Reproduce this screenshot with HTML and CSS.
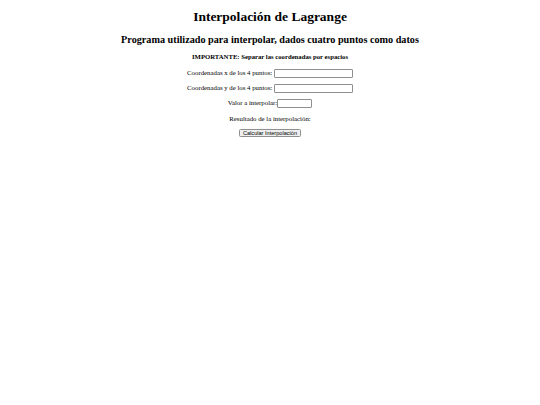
FILE: index.html
```html
<!DOCTYPE html>
<html lang="es">
<head>
<meta charset="utf-8">
<title>Interpolación de Lagrange</title>
<link rel="stylesheet" href="styles.css">
</head>
<body>
<div class="page">
  <h1 class="title">Interpolación de Lagrange</h1>
  <h2 class="subtitle">Programa utilizado para interpolar, dados cuatro puntos como datos</h2>
  <h5 class="note">IMPORTANTE: Separar las coordenadas por espacios</h5>
  <p class="row">Coordenadas x de los 4 puntos: <input class="field" type="text"></p>
  <p class="row">Coordenadas y de los 4 puntos: <input class="field" type="text"></p>
  <p class="row">Valor a interpolar:<input class="field short" type="text"></p>
  <p class="row">Resultado de la interpolación:</p>
  <div class="actions"><button class="btn" type="button">Calcular Interpolación</button></div>
</div>
</body>
</html>
```
FILE: styles.css
```css
html, body {
  margin: 0;
  padding: 0;
  background: #fff;
}
body {
  font-family: "Liberation Serif", "Times New Roman", serif;
  color: #000;
}
.page {
  padding: 3px 3px;
  text-align: center;
}
.title {
  font-size: 13.5px;
  line-height: 16px;
  margin: 6px 0 9px;
  font-weight: bold;
}
.subtitle {
  font-size: 10.2px;
  line-height: 12px;
  margin: 8.5px 0 7px;
  font-weight: bold;
}
.note {
  font-size: 6.7px;
  line-height: 8px;
  margin: 7px 0 6.6px;
  font-weight: bold;
}
.row {
  font-size: 6.8px;
  line-height: 9px;
  margin: 5.5px 0;
}
.field {
  box-sizing: border-box;
  width: 79px;
  height: 9px;
  margin: 0;
  padding: 0 1px;
  border: 1px solid #8f8f8f;
  border-radius: 1px;
  vertical-align: middle;
  font-size: 6px;
  background: #fff;
}
.field.short {
  width: 35px;
}
.actions {
  font-size: 6px;
  line-height: 9px;
  margin: 0;
}
.btn {
  box-sizing: border-box;
  height: 8.5px;
  padding: 0 3px;
  margin: 0;
  vertical-align: middle;
  font-family: "Liberation Sans", Arial, sans-serif;
  font-size: 5.6px;
  line-height: 6px;
  color: #000;
  background: #efefef;
  border: 1px solid #8f8f8f;
  border-radius: 1.5px;
}
```
